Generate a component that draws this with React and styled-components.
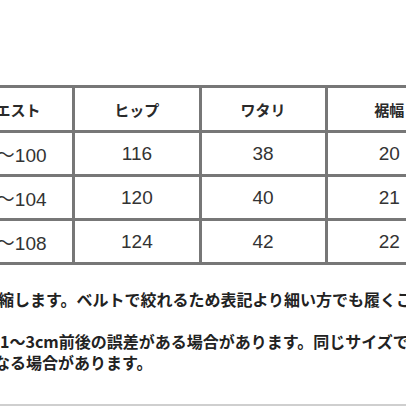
import React from "react";
import styled, { createGlobalStyle } from "styled-components";

const GlobalStyle = createGlobalStyle`
	html, body {
		margin: 0;
		padding: 0;
		background: #fff;
		overflow: hidden;
	}
`;

const Page = styled.div`
	display: flex;
	flex-direction: column;
	width: 406px;
	height: 406px;
	overflow: hidden;
	font-family: "Liberation Sans", "Noto Sans CJK JP", sans-serif;
	color: #222;
`;

const Table = styled.table`
	border-collapse: collapse;
	table-layout: fixed;
	width: 508px;
	margin: 85px 0 0 -54px;
	flex-shrink: 0;
`;

const Head = styled.th`
	height: 42px;
	border: 3px solid #777;
	font-family: "Noto Sans CJK JP", sans-serif;
	font-size: 15px;
	font-weight: 700;
	color: #2a2a2a;
	text-align: center;
	padding: 0;
`;

const Cell = styled.td`
	height: 41px;
	border: 3px solid #777;
	font-size: 19px;
	color: #333;
	text-align: center;
	padding: 0;
`;

const Notes = styled.div`
	display: flex;
	flex-direction: column;
	margin-top: 24px;
	font-family: "Noto Sans CJK JP", sans-serif;
	font-weight: 700;
	font-size: 16px;
	line-height: 21px;
	color: #222;
`;

const Line = styled.div`
	white-space: nowrap;
	height: 21px;
	line-height: 21px;
	margin-left: ${({ $shift }) => $shift || 0}px;
	margin-top: ${({ $gap }) => $gap || 0}px;
`;

const Rule = styled.div`
	margin-top: auto;
	height: 2px;
	background: #cfcfcf;
`;

const heads = ["ウエスト", "ヒップ", "ワタリ", "裾幅"];
const rows = [
	["68～100", "116", "38", "20"],
	["72～104", "120", "40", "21"],
	["76～108", "124", "42", "22"],
];

export default function App() {
	return (
		<Page>
			<GlobalStyle />
			<Table>
				<thead>
					<tr>
						{heads.map((h) => (
							<Head key={h}>{h}</Head>
						))}
					</tr>
				</thead>
				<tbody>
					{rows.map((r) => (
						<tr key={r[0]}>
							{r.map((v, i) => (
								<Cell key={i}>{v}</Cell>
							))}
						</tr>
					))}
				</tbody>
			</Table>
			<Notes>
				<Line $shift={-2}>縮します。ベルトで絞れるため表記より細い方でも履くことができます。</Line>
				<Line $gap={21}>1～3cm前後の誤差がある場合があります。同じサイズでも</Line>
				<Line $shift={-6}>なる場合があります。</Line>
			</Notes>
			<Rule />
		</Page>
	);
}
